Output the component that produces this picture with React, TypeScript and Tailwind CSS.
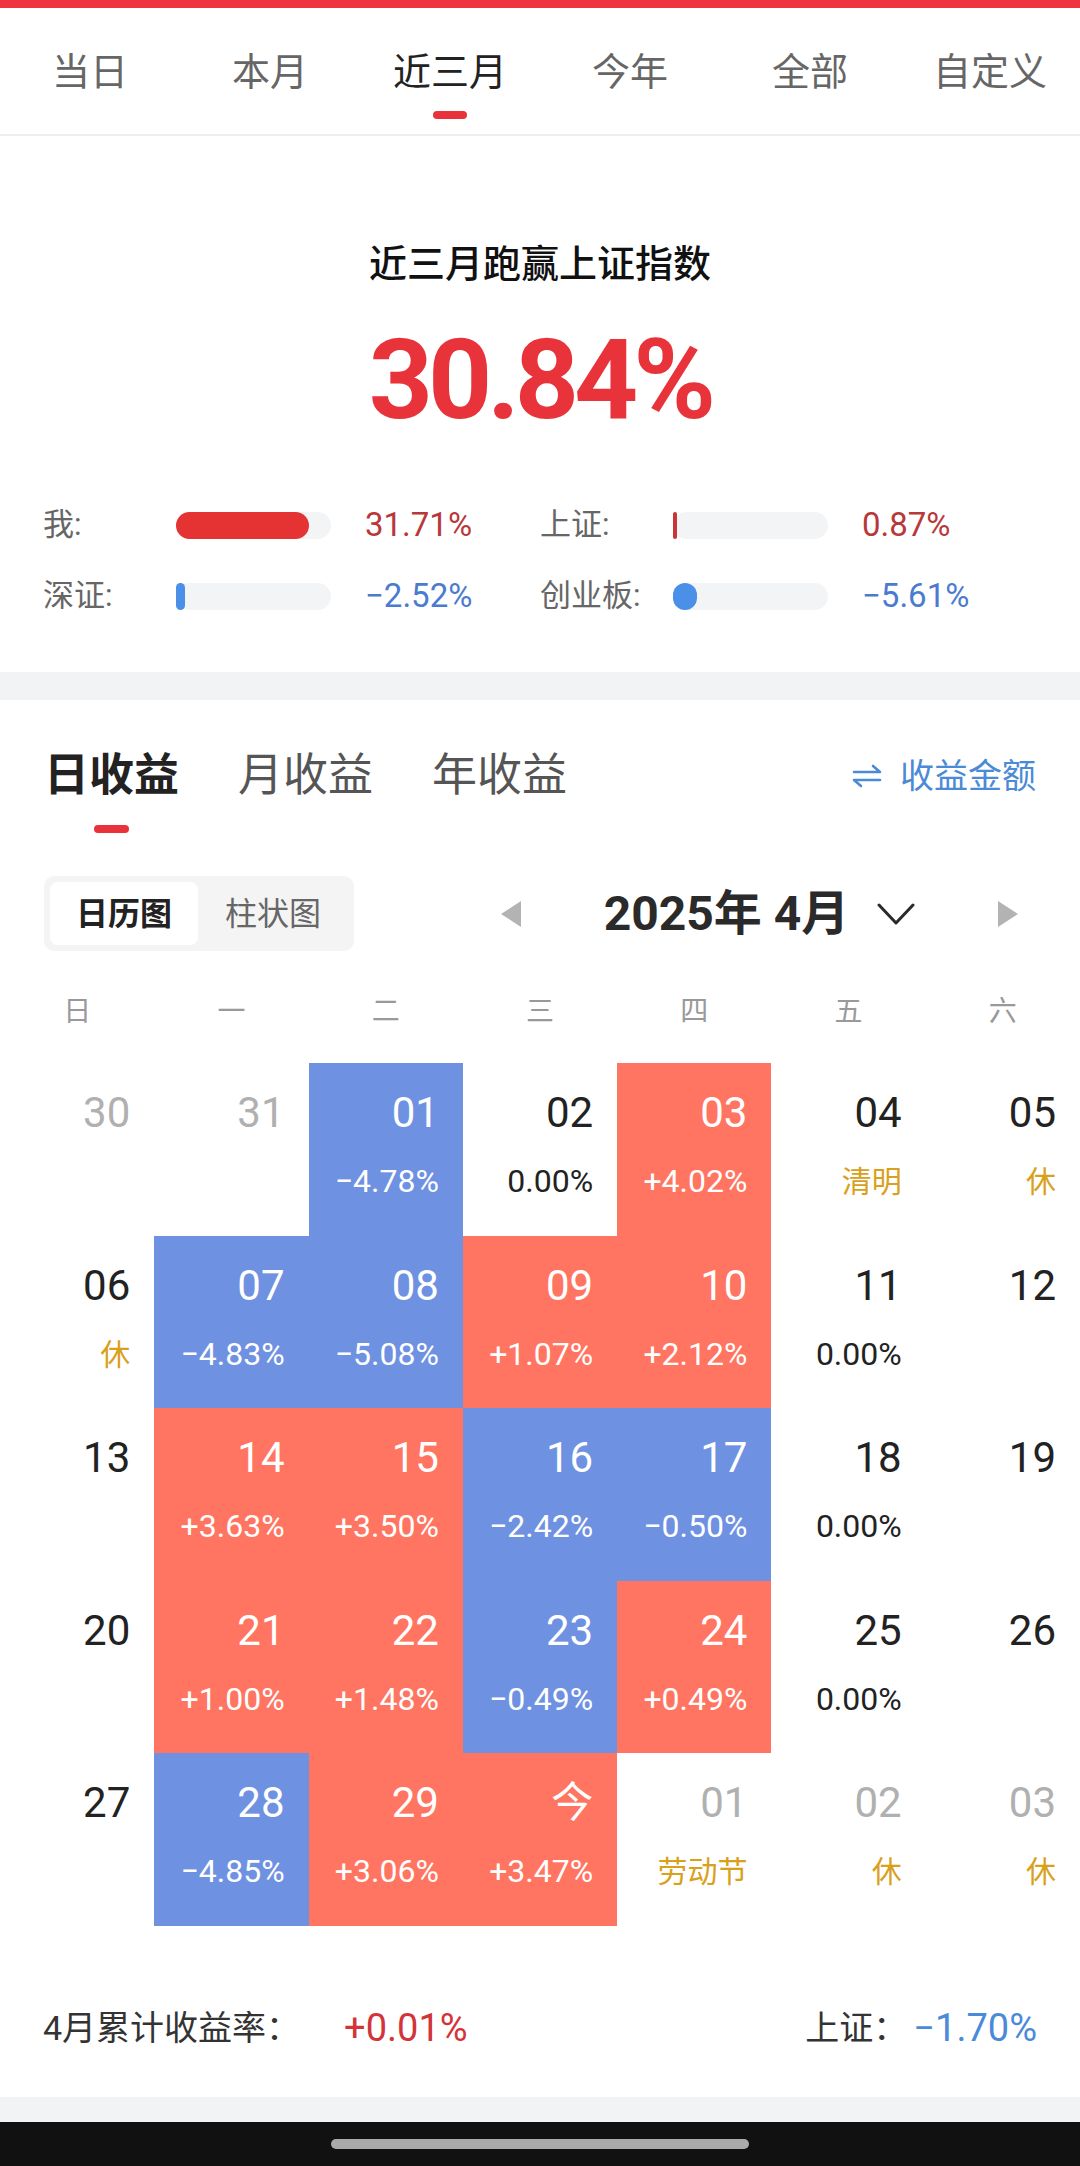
import React from 'react';

type Tone = 'blue' | 'red' | 'none';

interface DayCell {
  d: string;
  tone: Tone;
  pct?: string;
  note?: string;
  muted?: boolean;
}

const periods = ['当日', '本月', '近三月', '今年', '全部', '自定义'];
const weekdays = ['日', '一', '二', '三', '四', '五', '六'];

const days: DayCell[] = [
  { d: '30', tone: 'none', muted: true },
  { d: '31', tone: 'none', muted: true },
  { d: '01', tone: 'blue', pct: '−4.78%' },
  { d: '02', tone: 'none', pct: '0.00%' },
  { d: '03', tone: 'red', pct: '+4.02%' },
  { d: '04', tone: 'none', note: '清明' },
  { d: '05', tone: 'none', note: '休' },

  { d: '06', tone: 'none', note: '休' },
  { d: '07', tone: 'blue', pct: '−4.83%' },
  { d: '08', tone: 'blue', pct: '−5.08%' },
  { d: '09', tone: 'red', pct: '+1.07%' },
  { d: '10', tone: 'red', pct: '+2.12%' },
  { d: '11', tone: 'none', pct: '0.00%' },
  { d: '12', tone: 'none' },

  { d: '13', tone: 'none' },
  { d: '14', tone: 'red', pct: '+3.63%' },
  { d: '15', tone: 'red', pct: '+3.50%' },
  { d: '16', tone: 'blue', pct: '−2.42%' },
  { d: '17', tone: 'blue', pct: '−0.50%' },
  { d: '18', tone: 'none', pct: '0.00%' },
  { d: '19', tone: 'none' },

  { d: '20', tone: 'none' },
  { d: '21', tone: 'red', pct: '+1.00%' },
  { d: '22', tone: 'red', pct: '+1.48%' },
  { d: '23', tone: 'blue', pct: '−0.49%' },
  { d: '24', tone: 'red', pct: '+0.49%' },
  { d: '25', tone: 'none', pct: '0.00%' },
  { d: '26', tone: 'none' },

  { d: '27', tone: 'none' },
  { d: '28', tone: 'blue', pct: '−4.85%' },
  { d: '29', tone: 'red', pct: '+3.06%' },
  { d: '今', tone: 'red', pct: '+3.47%' },
  { d: '01', tone: 'none', note: '劳动节', muted: true },
  { d: '02', tone: 'none', note: '休', muted: true },
  { d: '03', tone: 'none', note: '休', muted: true },
];

const Compare: React.FC<{ label: string; fill: string; value: string; valueColor: string }> = ({
  label,
  fill,
  value,
  valueColor,
}) => (
  <div className="flex items-center h-[40px]">
    <div className="w-[133px] text-[31px] leading-[40px] text-[#666]">{label}</div>
    <div className="w-[155px] h-[27px] rounded-full bg-[#f3f4f5] flex">
      <div className={fill} />
    </div>
    <div className={`ml-[34px] text-[33px] leading-[40px] ${valueColor}`}>{value}</div>
  </div>
);

const Cell: React.FC<{ c: DayCell }> = ({ c }) => {
  const bg = c.tone === 'blue' ? 'bg-[#6f91e2]' : c.tone === 'red' ? 'bg-[#ff7562]' : 'bg-white';
  const colored = c.tone !== 'none';
  const dayColor = colored ? 'text-white' : c.muted ? 'text-[#b0b0b0]' : 'text-[#222]';
  const pctColor = colored ? 'text-white' : 'text-[#222]';
  return (
    <div className={`h-[172.6px] flex flex-col items-end pr-[24px] pt-[29px] ${bg}`}>
      <div className={`text-[42px] leading-[42px] ${dayColor}`}>{c.d}</div>
      {c.pct && <div className={`mt-[32px] text-[32px] leading-[31px] ${pctColor}`}>{c.pct}</div>}
      {c.note && <div className="mt-[32px] text-[30px] leading-[31px] text-[#d9a01c]">{c.note}</div>}
    </div>
  );
};

export default function App() {
  return (
    <div className="w-[1080px] h-[2166px] bg-[#f2f3f5] flex flex-col font-['Roboto','Noto_Sans_CJK_SC',sans-serif] overflow-hidden">
      <div className="h-[8px] bg-[#f0343f]" />

      {/* period tabs */}
      <div className="h-[128px] bg-white border-b-2 border-[#eeeeee] grid grid-cols-6 pt-[45px]">
        {periods.map((p) => (
          <div key={p} className="flex flex-col items-center">
            <div className={`text-[38px] leading-[38px] ${p === '近三月' ? 'text-[#222]' : 'text-[#666]'}`}>{p}</div>
            {p === '近三月' && <div className="mt-[20px] w-[34px] h-[8px] rounded-full bg-[#e8333b]" />}
          </div>
        ))}
      </div>

      {/* summary */}
      <div className="bg-white flex flex-col items-center pt-[109px] pb-[56px]">
        <div className="text-[38px] leading-[38px] text-[#111] font-medium">近三月跑赢上证指数</div>
        <div className="mt-[41px] text-[112px] leading-[112px] font-bold tracking-[-5px] text-[#e8333b]">30.84%</div>
        <div className="mt-[69px] w-full px-[43px] grid grid-cols-2 gap-y-[31px]">
          <Compare label="我:" fill="w-[133px] h-full rounded-full bg-[#e53232]" value="31.71%" valueColor="text-[#b8383a]" />
          <Compare label="上证:" fill="w-[4px] h-full rounded-[2px] bg-[#c8363a]" value="0.87%" valueColor="text-[#b8383a]" />
          <Compare label="深证:" fill="w-[9px] h-full rounded-full bg-[#4a8fe8]" value="−2.52%" valueColor="text-[#4a7bd0]" />
          <Compare label="创业板:" fill="w-[24px] h-full rounded-full bg-[#4a8fe8]" value="−5.61%" valueColor="text-[#4a7bd0]" />
        </div>
      </div>

      <div className="h-[28px] shrink-0" />

      {/* earnings calendar */}
      <div className="bg-white flex flex-col pt-[54px] pb-[51px]">
        <div className="flex items-start justify-between px-[44px]">
          <div className="flex gap-[59px]">
            {['日收益', '月收益', '年收益'].map((t, i) => (
              <div key={t} className="flex flex-col items-center">
                <div
                  className={`text-[45px] leading-[44px] ${i === 0 ? 'font-bold text-[#222]' : 'text-[#555]'}`}
                >
                  {t}
                </div>
                {i === 0 && <div className="mt-[27px] w-[35px] h-[8px] rounded-full bg-[#e8333b]" />}
              </div>
            ))}
          </div>
          <div className="h-[44px] flex items-center gap-[18px] text-[34px] text-[#4a8ad6]">
            <svg width="30" height="26" viewBox="0 0 30 26" fill="none" stroke="#4a8ad6" strokeWidth="2.6" strokeLinecap="round" strokeLinejoin="round">
              <path d="M2 9 H28 L21 3" />
              <path d="M28 17 H2 L9 23" />
            </svg>
            <span>收益金额</span>
          </div>
        </div>

        <div className="mt-[43px] px-[44px] flex items-center">
          <div className="w-[310px] h-[75px] rounded-[10px] bg-[#f4f4f4] p-[6px] flex">
            <div className="w-[148px] rounded-[8px] bg-white flex items-center justify-center text-[32px] font-bold text-[#222]">
              日历图
            </div>
            <div className="flex-1 flex items-center justify-center text-[32px] text-[#666]">柱状图</div>
          </div>
          <div className="ml-[147px] flex-1 flex items-center justify-between pr-[18px]">
            <svg width="20" height="26" viewBox="0 0 20 26">
              <path d="M20 0 L0 13 L20 26 Z" fill="#b3b3b3" />
            </svg>
            <div className="flex items-center">
              <span className="text-[48px] leading-[46px] font-bold text-[#2a2a2a]">2025年 4月</span>
              <svg className="ml-[28px]" width="38" height="22" viewBox="0 0 38 22" fill="none" stroke="#2a2a2a" strokeWidth="3" strokeLinecap="round" strokeLinejoin="round">
                <path d="M2 2 L19 20 L36 2" />
              </svg>
            </div>
            <svg width="20" height="26" viewBox="0 0 20 26">
              <path d="M0 0 L20 13 L0 26 Z" fill="#b3b3b3" />
            </svg>
          </div>
        </div>

        <div className="mt-[47px] grid grid-cols-7">
          {weekdays.map((w) => (
            <div key={w} className="text-center text-[28px] leading-[28px] text-[#999]">
              {w}
            </div>
          ))}
        </div>

        <div className="mt-[37px] grid grid-cols-7">
          {days.map((c, i) => (
            <Cell key={i} c={c} />
          ))}
        </div>

        <div className="mt-[84px] px-[43px] flex items-center justify-between">
          <div className="flex items-center">
            <span className="text-[34px] leading-[36px] text-[#333]">4月累计收益率：</span>
            <span className="ml-[44px] text-[38px] leading-[36px] text-[#d2343a]">+0.01%</span>
          </div>
          <div className="flex items-center">
            <span className="text-[34px] leading-[36px] text-[#333]">上证：</span>
            <span className="ml-[6px] text-[38px] leading-[36px] text-[#4a8ad8]">−1.70%</span>
          </div>
        </div>
      </div>

      <div className="flex-1" />

      <div className="h-[44px] shrink-0 bg-[#111] flex items-center justify-center">
        <div className="w-[418px] h-[10px] rounded-full bg-[#aaaaaa]" />
      </div>
    </div>
  );
}
